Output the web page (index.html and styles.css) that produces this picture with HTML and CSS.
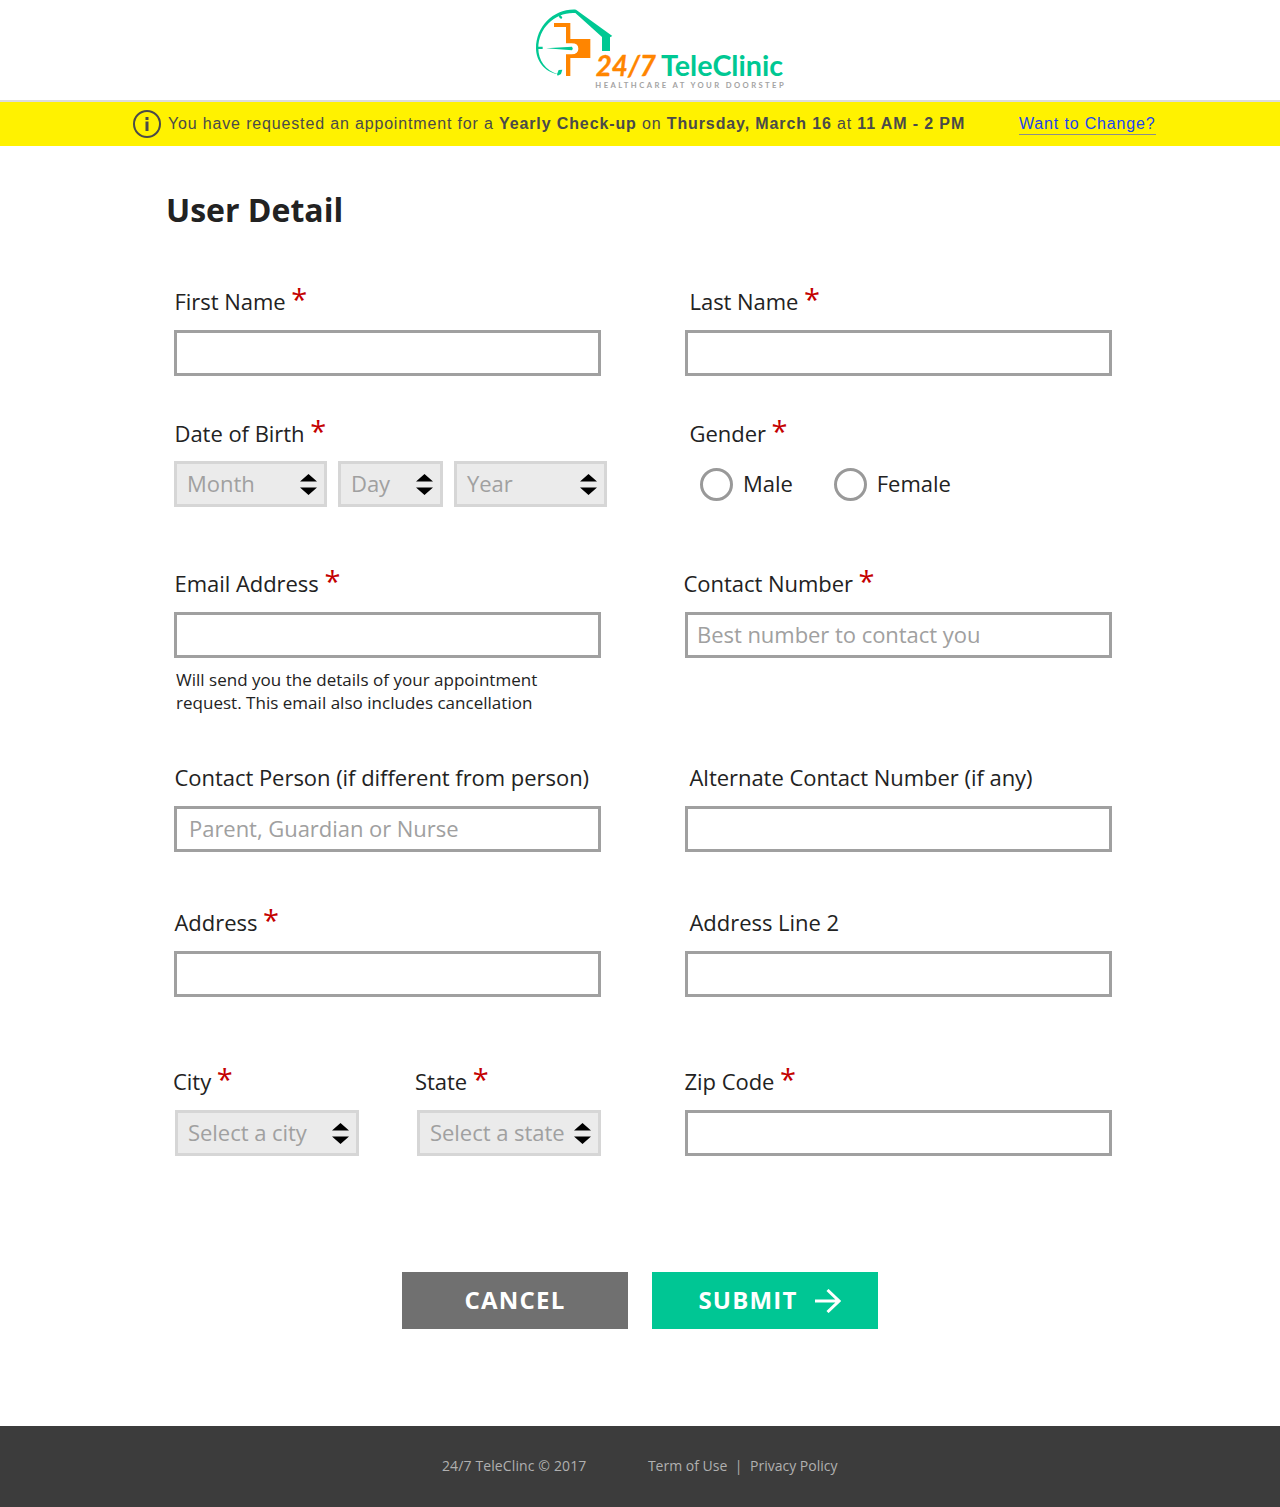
FILE: index.html
```html
<!DOCTYPE html>
<html lang="en">
<head>
<meta charset="utf-8">
<title>24/7 TeleClinic - User Detail</title>
<link rel="stylesheet" href="styles.css">
</head>
<body>
<svg class="defs" width="0" height="0" aria-hidden="true">
  <symbol id="sorter" viewBox="0 0 17 21"><path d="M0 7.5 8.5 0 17 7.5ZM0 13.5 8.5 21 17 13.5Z"/></symbol>
</svg>
<header class="header">
  <svg class="logo" viewBox="0 0 810 300" role="img" aria-label="24/7 TeleClinic">
    <g fill="#00c893">
      <path d="M153 29 262 108 255 112V153H231V111L151 39C92 35 40 82 40 145C40 180 61 212 99 223C58 216 33 182 33 145C33 78 88 25 153 29Z"/>
      <path d="M38 140H53V147H38ZM63 144.500 141 140Q146 146 141 151ZM101 47 105 44 112 52 109 57 104 54ZM101 210 112 209 108 222 98 227 96 223Z"/>
    </g>
    <path fill="#ff8500" d="M87 69H136V117H196V174H136V228H123V163H140Q160 162 160 146T140 130H123V81H87Z"/>
    <text class="logo-num" x="212" y="227" textLength="181" lengthAdjust="spacingAndGlyphs">24/7</text>
    <text class="logo-name" x="408" y="227" textLength="366" lengthAdjust="spacingAndGlyphs">TeleClinic</text>
    <text class="logo-tag" x="211" y="263" textLength="565">HEALTHCARE AT YOUR DOORSTEP</text>
  </svg>
</header>
<div class="notice">
  <svg class="info" viewBox="0 0 28 28"><circle cx="14" cy="14" r="13" fill="none" stroke="#4a4a4a" stroke-width="2"/><path fill="#4a4a4a" d="M12.500 7H15.500V10H12.500ZM12.500 11.500H15.500V21H12.500Z"/></svg>
  <p class="notice-text">You have requested an appointment for a <b>Yearly Check-up</b> on <b>Thursday, March 16</b> at <b>11 AM - 2 PM</b></p>
  <a class="change" href="#">Want to Change?</a>
</div>
<main class="main">
  <h1 class="title">User Detail</h1>
  <form class="form">
    <div class="field"><label class="label">First Name <span class="req">*</span></label><input class="input" type="text"></div>
    <div class="field"><label class="label label-in">Last Name <span class="req">*</span></label><input class="input" type="text"></div>

    <div class="field"><label class="label">Date of Birth <span class="req">*</span></label>
      <div class="dates">
        <div class="select">Month<svg class="arrows"><use href="#sorter"/></svg></div>
        <div class="select">Day<svg class="arrows"><use href="#sorter"/></svg></div>
        <div class="select">Year<svg class="arrows"><use href="#sorter"/></svg></div>
      </div>
    </div>
    <div class="field"><label class="label label-in">Gender <span class="req">*</span></label>
      <div class="radios">
        <label class="radio"><span class="dot"></span><span class="radio-text">Male</span></label>
        <label class="radio"><span class="dot"></span><span class="radio-text">Female</span></label>
      </div>
    </div>

    <div class="field"><label class="label">Email Address <span class="req">*</span></label><input class="input" type="text">
      <p class="hint">Will send you the details of your appointment<br>request. This email also includes cancellation</p>
    </div>
    <div class="field"><label class="label label-out">Contact Number <span class="req">*</span></label><input class="input input-phone" type="text" placeholder="Best number to contact you"></div>

    <div class="field"><label class="label">Contact Person (if different from person)</label><input class="input" type="text" placeholder="Parent, Guardian or Nurse"></div>
    <div class="field"><label class="label label-in">Alternate Contact Number (if any)</label><input class="input" type="text"></div>

    <div class="field"><label class="label">Address <span class="req">*</span></label><input class="input" type="text"></div>
    <div class="field"><label class="label label-in">Address Line 2</label><input class="input" type="text"></div>

    <div class="places">
      <div class="field"><label class="label label-place">City <span class="req">*</span></label><div class="select">Select a city<svg class="arrows"><use href="#sorter"/></svg></div></div>
      <div class="field"><label class="label label-place">State <span class="req">*</span></label><div class="select">Select a state<svg class="arrows"><use href="#sorter"/></svg></div></div>
    </div>
    <div class="field"><label class="label label-zip">Zip Code <span class="req">*</span></label><input class="input" type="text"></div>
  </form>
  <div class="actions">
    <button class="btn cancel" type="button">CANCEL</button>
    <button class="btn submit" type="button">SUBMIT<svg class="go" viewBox="0 0 26 24"><path d="M0 12H24M12.500 1 24 12 12.500 23" fill="none" stroke="#fff" stroke-width="3"/></svg></button>
  </div>
</main>
<footer class="footer">
  <span class="copy">24/7 TeleClinc © 2017</span>
  <nav class="links"><a>Term of Use</a><span>|</span><a>Privacy Policy</a></nav>
</footer>
</body>
</html>
```
FILE: styles.css
```css
* { box-sizing: border-box; }
body { margin: 0; background: #fff; color: #222; font-family: "Open Sans", sans-serif; font-size: 22px; }
p, h1 { margin: 0; }
.defs { display: block; }
.header { height: 102px; border-bottom: 2px solid #dcdcdc; padding-left: 525px; }
.logo { display: block; width: 270px; height: 100px; }
.logo-num, .logo-name, .logo-tag { font-family: Lato, sans-serif; font-weight: 700; }
.logo-num { font-size: 88px; font-style: italic; fill: #ff8500; stroke: #ff8500; stroke-width: 1px; }
.logo-name { font-size: 86px; fill: #00c893; }
.logo-tag { font-size: 23px; fill: #a3a3a3; }

.notice { height: 44px; padding-left: 133px; display: flex; align-items: center; background: #fff200; color: #4a4a4a; font-family: "Liberation Sans", sans-serif; font-size: 16px; letter-spacing: .84px; white-space: nowrap; }
.notice b { letter-spacing: .88px; }
.info { width: 28px; height: 28px; margin-right: 7px; }
.notice-text { width: 851px; }
.change { color: #1b44f0; text-decoration: none; border-bottom: 1px solid #8c8c8c; line-height: 20px; }

.main { height: 1280px; padding: 39px 168px 0 174px; }
.title { margin-left: -8px; height: 101px; font-size: 32px; line-height: 50px; font-weight: 700; }
.form { display: grid; grid-template-columns: 427px 427px; column-gap: 84px; grid-template-rows: 132px 150px 194px 145px 159px 90px; letter-spacing: -.04px; }
.field { display: flex; flex-direction: column; }
.label { height: 30px; line-height: 30px; margin-bottom: 14px; padding-left: .5px; white-space: nowrap; }
.label-in { padding-left: 4.5px; }
.label-out { margin-left: -2px; }
.label-place { padding-left: 0; margin-left: -2px; }
.label-zip { padding-left: 0; margin-left: -.5px; }
.req { color: #c40000; font-size: 29px; line-height: 0; }
.input { flex: none; width: 427px; height: 46px; border: 3px solid #a0a0a0; background: #fff; padding: 0 12px 2px; font: inherit; letter-spacing: inherit; outline: 0; }
.input-phone { padding: 0 9px 2px; }
.input::placeholder { color: #a0a0a0; opacity: 1; }
.dates { display: grid; grid-template-columns: 153px 105px 153px; gap: 11px; margin-top: -1px; }
.select { height: 46px; display: flex; align-items: center; justify-content: space-between; padding: 0 7px 2px 10px; border: 3px solid #d6d6d6; background: #ebebeb; color: #a0a0a0; line-height: 36px; white-space: nowrap; }
.arrows { width: 17px; height: 21px; fill: #000; margin-top: 3px; }
.radios { display: flex; gap: 41px; padding: 6px 0 0 15px; }
.radio { display: flex; align-items: center; gap: 10px; height: 33px; }
.radio-text { padding-bottom: 3px; }
.dot { width: 33px; height: 33px; border: 3px solid #999; border-radius: 50%; }
.hint { margin: 10px 0 0 2px; font-size: 17px; line-height: 23px; letter-spacing: .02px; color: #222; white-space: nowrap; }
.places { display: grid; grid-template-columns: 184px 184px; gap: 58px; padding-left: 1px; }
.actions { display: flex; gap: 24px; margin: 116px 0 0 228px; }
.btn { width: 226px; height: 57px; border: 0; padding: 0 0 3px; color: #fff; font: 700 24px "Open Sans", sans-serif; letter-spacing: 1.2px; display: flex; align-items: center; justify-content: center; }
.cancel { background: #707070; }
.submit { background: #00c694; padding-left: 9px; }
.go { width: 26px; height: 24px; margin: 3px 0 0 17px; }
.footer { height: 81px; padding: 0 0 2px 442px; background: #3c3c3c; color: #b0b0b0; font-size: 14px; display: flex; align-items: center; gap: 61.5px; white-space: nowrap; }
.copy { letter-spacing: .12px; }
.links { display: flex; gap: 7.5px; }
```
